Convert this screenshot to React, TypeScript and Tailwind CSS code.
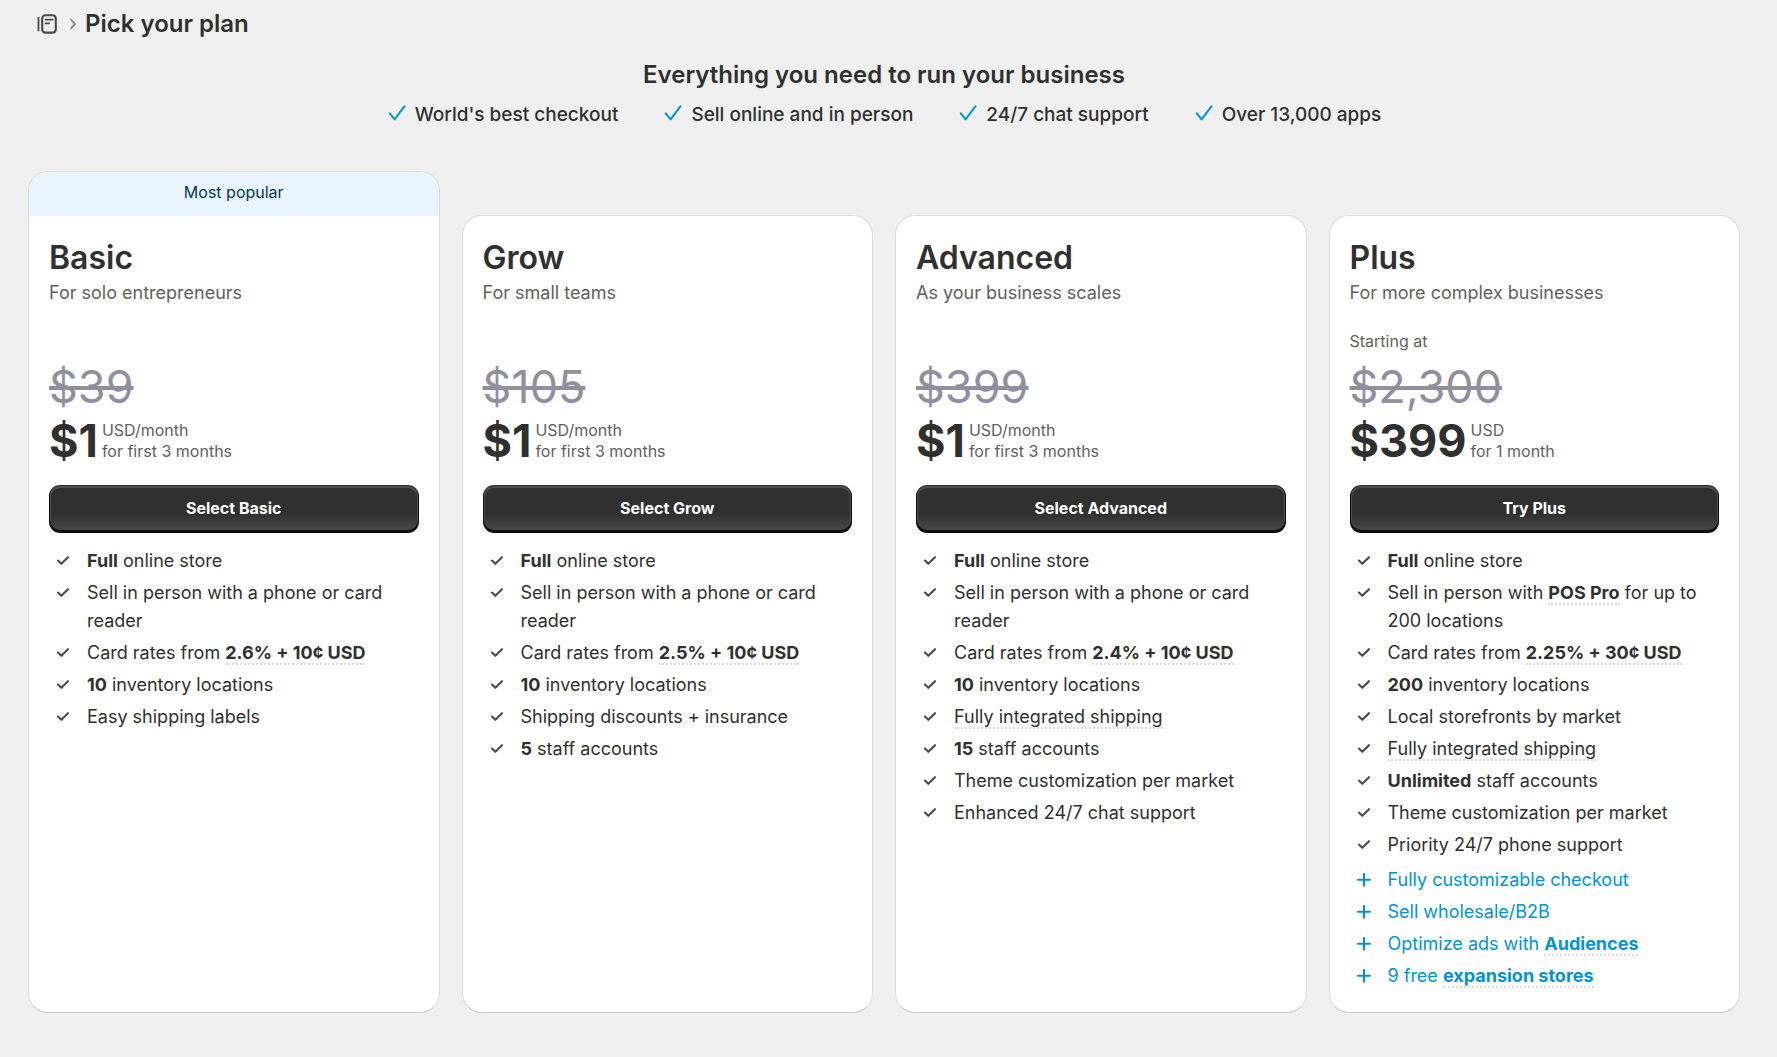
import type { ReactNode } from 'react';

type Plan = {
  name: string;
  tagline: string;
  prefix?: string;
  oldPrice: string;
  price: string;
  unit: string;
  period: string;
  cta: string;
  popular?: boolean;
  features: ReactNode[];
  extras?: ReactNode[];
};

const benefits = [
  "World's best checkout",
  'Sell online and in person',
  '24/7 chat support',
  'Over 13,000 apps',
];

function Bold({ children }: { children: ReactNode }) {
  return <strong className="font-bold">{children}</strong>;
}

function Hint({ bold = true, children }: { bold?: boolean; children: ReactNode }) {
  return (
    <span className={`border-b-2 border-dotted border-[#dadada] ${bold ? 'font-bold' : ''}`}>
      {children}
    </span>
  );
}

const plans: Plan[] = [
  {
    name: 'Basic',
    tagline: 'For solo entrepreneurs',
    oldPrice: '$39',
    price: '$1',
    unit: 'USD/month',
    period: 'for first 3 months',
    cta: 'Select Basic',
    popular: true,
    features: [
      <><Bold>Full</Bold> online store</>,
      <>Sell in person with a phone or card reader</>,
      <>Card rates from <Hint>2.6% + 10¢ USD</Hint></>,
      <><Bold>10</Bold> inventory locations</>,
      <>Easy shipping labels</>,
    ],
  },
  {
    name: 'Grow',
    tagline: 'For small teams',
    oldPrice: '$105',
    price: '$1',
    unit: 'USD/month',
    period: 'for first 3 months',
    cta: 'Select Grow',
    features: [
      <><Bold>Full</Bold> online store</>,
      <>Sell in person with a phone or card reader</>,
      <>Card rates from <Hint>2.5% + 10¢ USD</Hint></>,
      <><Bold>10</Bold> inventory locations</>,
      <>Shipping discounts + insurance</>,
      <><Bold>5</Bold> staff accounts</>,
    ],
  },
  {
    name: 'Advanced',
    tagline: 'As your business scales',
    oldPrice: '$399',
    price: '$1',
    unit: 'USD/month',
    period: 'for first 3 months',
    cta: 'Select Advanced',
    features: [
      <><Bold>Full</Bold> online store</>,
      <>Sell in person with a phone or card reader</>,
      <>Card rates from <Hint>2.4% + 10¢ USD</Hint></>,
      <><Bold>10</Bold> inventory locations</>,
      <Hint bold={false}>Fully integrated shipping</Hint>,
      <><Bold>15</Bold> staff accounts</>,
      <>Theme customization per market</>,
      <>Enhanced 24/7 chat support</>,
    ],
  },
  {
    name: 'Plus',
    tagline: 'For more complex businesses',
    prefix: 'Starting at',
    oldPrice: '$2,300',
    price: '$399',
    unit: 'USD',
    period: 'for 1 month',
    cta: 'Try Plus',
    features: [
      <><Bold>Full</Bold> online store</>,
      <>Sell in person with <Hint>POS Pro</Hint> for up to 200 locations</>,
      <>Card rates from <Hint>2.25% + 30¢ USD</Hint></>,
      <><Bold>200</Bold> inventory locations</>,
      <>Local storefronts by market</>,
      <Hint bold={false}>Fully integrated shipping</Hint>,
      <><Bold>Unlimited</Bold> staff accounts</>,
      <>Theme customization per market</>,
      <>Priority 24/7 phone support</>,
    ],
    extras: [
      <>Fully customizable checkout</>,
      <>Sell wholesale/B2B</>,
      <>Optimize ads with <Hint>Audiences</Hint></>,
      <>9 free <Hint>expansion stores</Hint></>,
    ],
  },
];

function PlanIcon() {
  return (
    <svg viewBox="0 0 20 20" className="size-5" fill="none" stroke="#4a4a4a" strokeLinecap="round" aria-hidden="true">
      <path d="M1.5 3.6v12.8" strokeWidth="1.8" />
      <rect x="5.2" y="1.2" width="13.6" height="17.4" rx="3.2" strokeWidth="2.1" />
      <path d="M8.6 5.7h7" strokeWidth="1.8" />
      <path d="M8.6 9.4h3.4" strokeWidth="1.8" />
    </svg>
  );
}

function ChevronIcon() {
  return (
    <svg viewBox="0 0 8 12" className="h-3 w-2" fill="none" stroke="#8a8a8a" strokeWidth="1.9" strokeLinecap="round" strokeLinejoin="round" aria-hidden="true">
      <path d="M2 1.6 6 6 2 10.4" />
    </svg>
  );
}

function BenefitCheck() {
  return (
    <svg viewBox="0 0 20 20" className="size-5" fill="none" stroke="#0094d5" strokeWidth="2" strokeLinecap="round" strokeLinejoin="round" aria-hidden="true">
      <path d="M2.8 8.4 7.6 14.4 17.4 1.4" />
    </svg>
  );
}

function CheckIcon() {
  return (
    <svg viewBox="0 0 20 20" className="size-5" fill="none" stroke="#4a4a4a" strokeWidth="2.1" strokeLinecap="round" strokeLinejoin="round" aria-hidden="true">
      <path d="M5 9.6 8.3 12.8 15 6.2" />
    </svg>
  );
}

function PlusIcon() {
  return (
    <svg viewBox="0 0 20 20" className="size-5" fill="none" stroke="#0094d5" strokeWidth="2" strokeLinecap="round" aria-hidden="true">
      <path d="M10 3.8v12M4 9.8h12" />
    </svg>
  );
}

function FeatureList({ items, icon }: { items: ReactNode[]; icon: ReactNode }) {
  return (
    <ul className="flex flex-col gap-1">
      {items.map((item, i) => (
        <li key={i} className="flex gap-[10px] text-lg leading-7">
          <span className="flex h-7 w-7 shrink-0 items-center justify-center">{icon}</span>
          <span>{item}</span>
        </li>
      ))}
    </ul>
  );
}

function PlanCard({ plan }: { plan: Plan }) {
  return (
    <section
      className={`flex flex-col overflow-hidden rounded-[20px] border border-[#dcdcdc] border-b-[#cacaca] bg-white ${
        plan.popular ? '' : 'mt-11'
      }`}
    >
      {plan.popular && (
        <p className="h-11 bg-[#eaf4ff] pt-2 text-center text-base text-[#003a5a]">Most popular</p>
      )}
      <div className="px-5 py-[22px]">
        <h3 className="text-[32px] leading-10 font-semibold">{plan.name}</h3>
        <p className="mt-[3px] text-lg leading-6 text-[#616161]">{plan.tagline}</p>
        <p className="mt-6 h-6 text-base text-[#616161]">{plan.prefix}</p>

        <p className="mt-[7px] text-[45px] leading-[54px] text-[#918f9f]">
          <s className="decoration-4">{plan.oldPrice}</s>
        </p>
        <div className="flex items-center gap-1">
          <span className="text-[45px] leading-[54px] font-bold">{plan.price}</span>
          <span className="text-base leading-[21px] text-[#616161]">
            {plan.unit}
            <br />
            {plan.period}
          </span>
        </div>

        <button
          type="button"
          className="mt-[17px] h-12 w-full rounded-[11px] bg-[#303030] bg-linear-to-b from-[#303030] from-60% to-[#4c4c4c] pb-0.5 text-base font-bold text-white shadow-[inset_0_-2px_0_1px_rgba(0,0,0,0.8),inset_0_0_0_1px_#303030,inset_0_1px_0_2px_rgba(255,255,255,0.15)]"
        >
          {plan.cta}
        </button>

        <div className="mt-[14px] flex flex-col gap-[7px]">
          <FeatureList items={plan.features} icon={<CheckIcon />} />
          {plan.extras && (
            <div className="text-[#0094d5]">
              <FeatureList items={plan.extras} icon={<PlusIcon />} />
            </div>
          )}
        </div>
      </div>
    </section>
  );
}

export default function App() {
  return (
    <div className="min-h-screen bg-[#f0f0f0] pt-[10px] pr-[37px] pb-11 pl-7 font-['Inter',sans-serif] text-[#303030]">
      <header className="flex items-center gap-3 pl-[9px]">
        <a href="#" aria-label="Plans">
          <PlanIcon />
        </a>
        <div className="flex items-center gap-2">
          <ChevronIcon />
          <h1 className="text-2xl leading-7 font-semibold">Pick your plan</h1>
        </div>
      </header>

      <main>
        <div className="mt-[21px] flex flex-col items-center gap-[10px]">
          <h2 className="text-2xl font-semibold">Everything you need to run your business</h2>
          <ul className="flex flex-wrap justify-center gap-x-[45px] gap-y-2">
            {benefits.map((benefit) => (
              <li key={benefit} className="flex items-center gap-2 text-[19px] leading-7 font-medium">
                <BenefitCheck />
                {benefit}
              </li>
            ))}
          </ul>
        </div>

        <div className="mt-[42px] grid grid-cols-4 gap-[22px]">
          {plans.map((plan) => (
            <PlanCard key={plan.name} plan={plan} />
          ))}
        </div>
      </main>
    </div>
  );
}
